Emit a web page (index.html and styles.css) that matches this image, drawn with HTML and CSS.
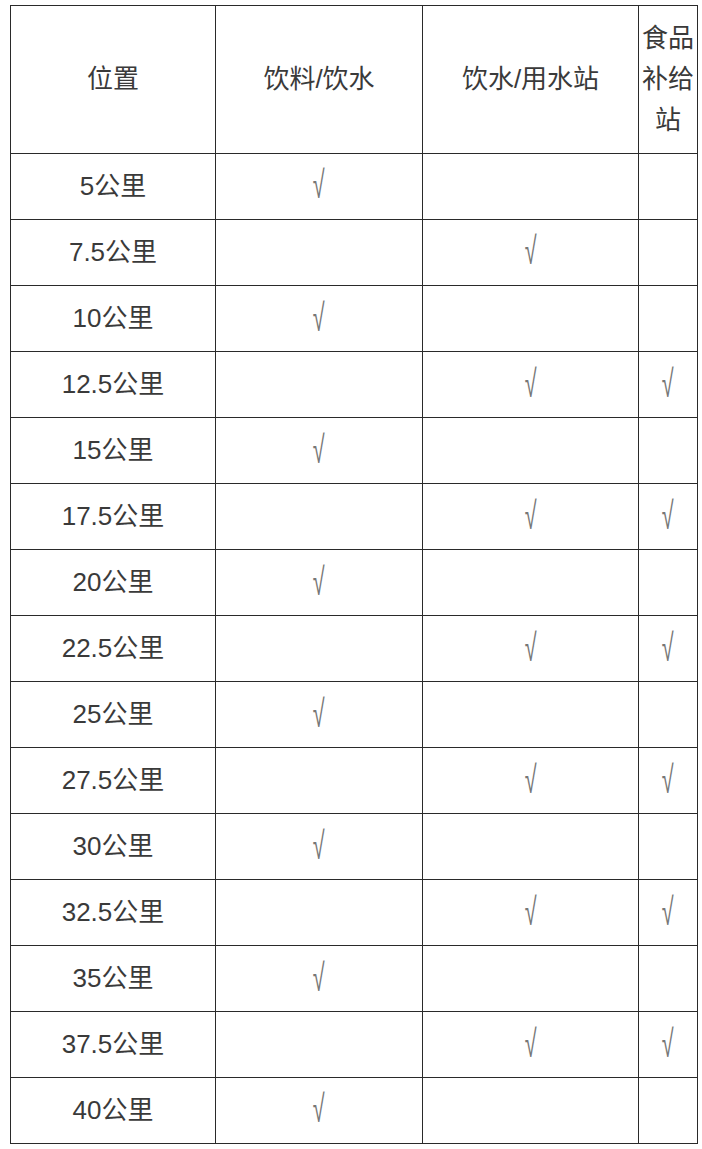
FILE: index.html
```html
<!DOCTYPE html>
<html lang="zh">
<head>
<meta charset="utf-8">
<link rel="stylesheet" href="styles.css">
</head>
<body>
<table class="stations">
  <colgroup>
    <col class="c1"><col class="c2"><col class="c3"><col class="c4">
  </colgroup>
  <tr class="head">
    <td>位置</td><td>饮料/饮水</td><td>饮水/用水站</td><td class="narrow">食品补给站</td>
  </tr>
  <tr><td>5公里</td><td class="ck"><span>√</span></td><td></td><td></td></tr>
  <tr><td>7.5公里</td><td></td><td class="ck"><span>√</span></td><td></td></tr>
  <tr><td>10公里</td><td class="ck"><span>√</span></td><td></td><td></td></tr>
  <tr><td>12.5公里</td><td></td><td class="ck"><span>√</span></td><td class="ck"><span>√</span></td></tr>
  <tr><td>15公里</td><td class="ck"><span>√</span></td><td></td><td></td></tr>
  <tr><td>17.5公里</td><td></td><td class="ck"><span>√</span></td><td class="ck"><span>√</span></td></tr>
  <tr><td>20公里</td><td class="ck"><span>√</span></td><td></td><td></td></tr>
  <tr><td>22.5公里</td><td></td><td class="ck"><span>√</span></td><td class="ck"><span>√</span></td></tr>
  <tr><td>25公里</td><td class="ck"><span>√</span></td><td></td><td></td></tr>
  <tr><td>27.5公里</td><td></td><td class="ck"><span>√</span></td><td class="ck"><span>√</span></td></tr>
  <tr><td>30公里</td><td class="ck"><span>√</span></td><td></td><td></td></tr>
  <tr><td>32.5公里</td><td></td><td class="ck"><span>√</span></td><td class="ck"><span>√</span></td></tr>
  <tr><td>35公里</td><td class="ck"><span>√</span></td><td></td><td></td></tr>
  <tr><td>37.5公里</td><td></td><td class="ck"><span>√</span></td><td class="ck"><span>√</span></td></tr>
  <tr><td>40公里</td><td class="ck"><span>√</span></td><td></td><td></td></tr>
</table>
</body>
</html>
```
FILE: styles.css
```css
html, body {
  margin: 0;
  padding: 0;
  background: #fff;
}
body {
  padding: 5px 0 0 10px;
}
.stations {
  border-collapse: collapse;
  table-layout: fixed;
  width: 687px;
  font-family: "Liberation Sans", "Noto Sans CJK SC", sans-serif;
  font-size: 26px;
  color: #3a3a3a;
}
.c1 { width: 205px; }
.c2 { width: 207px; }
.c3 { width: 216px; }
.c4 { width: 59px; }
.stations td {
  border: 1px solid #2a2a2a;
  padding: 12px 0;
  line-height: 41px;
  text-align: center;
  vertical-align: middle;
}
.stations td.ck {
  font-family: "DejaVu Sans", sans-serif;
  font-size: 24px;
  font-weight: 200;
  color: #777;
}
.stations td.ck span {
  display: inline-block;
  transform: scale(0.9, 1.6);
}
```
